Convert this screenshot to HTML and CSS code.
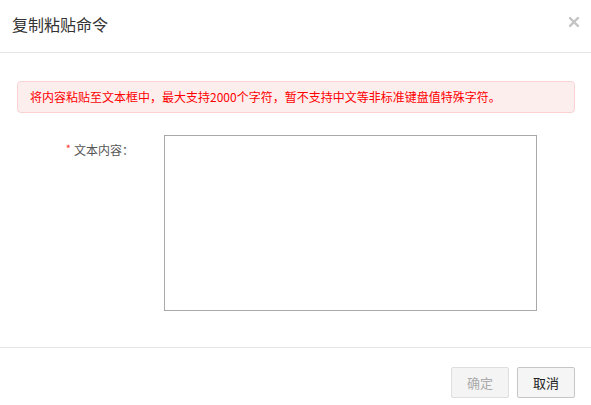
FILE: index.html
```html
<!DOCTYPE html>
<html lang="zh">
<head>
<meta charset="utf-8">
<title>复制粘贴命令</title>
<link rel="stylesheet" href="styles.css">
</head>
<body>
<div class="dialog">
  <div class="header">
    <div class="title">复制粘贴命令</div>
    <svg class="close" width="10" height="10" viewBox="0 0 10 10" aria-label="关闭">
      <path d="M1 1 L9 9 M9 1 L1 9" stroke="#c4c4c4" stroke-width="2.4" stroke-linecap="square"/>
    </svg>
  </div>
  <div class="content">
    <div class="alert">将内容粘贴至文本框中，最大支持2000个字符，暂不支持中文等非标准键盘值特殊字符。</div>
    <div class="form-row">
      <label class="label"><span class="req">*</span>文本内容：</label>
      <textarea class="input"></textarea>
    </div>
  </div>
  <div class="footer">
    <button class="btn btn-disabled" disabled>确定</button>
    <button class="btn btn-default">取消</button>
  </div>
</div>
</body>
</html>
```
FILE: styles.css
```css
html, body {
  margin: 0;
  padding: 0;
  background: #fff;
}
body {
  font-family: "Noto Sans CJK SC", "Liberation Sans", sans-serif;
  font-size: 12px;
  color: #333;
}
.dialog {
  width: 591px;
  height: 405px;
  display: flex;
  flex-direction: column;
}
.header {
  height: 52px;
  border-bottom: 1px solid #e5e5e5;
  display: flex;
  justify-content: space-between;
  align-items: flex-start;
  padding: 0 12px 0 12px;
}
.title {
  font-size: 16px;
  line-height: 22px;
  padding-top: 13px;
  color: #333;
}
.close {
  margin-top: 17px;
  display: block;
}
.content {
  padding: 28px 16px 36px 17px;
}
.alert {
  height: 30px;
  box-sizing: content-box;
  border: 1px solid #fad2d2;
  background: #fdeeee;
  border-radius: 4px;
  color: #f00;
  line-height: 30px;
  padding-left: 12px;
  font-size: 12px;
}
.form-row {
  display: flex;
  align-items: flex-start;
  margin-top: 22px;
}
.label {
  width: 117px;
  text-align: right;
  line-height: 20px;
  padding-top: 5px;
  color: #555;
  font-size: 12px;
}
.req {
  color: #f33;
  font-size: 11px;
  margin-right: 3px;
  position: relative;
  top: -2px;
}
.input {
  margin: 0 0 0 30px;
  width: 373px;
  height: 176px;
  box-sizing: border-box;
  border: 1px solid #a9a9a9;
  resize: none;
  padding: 4px;
  font-family: inherit;
  outline: none;
}
.footer {
  border-top: 1px solid #e5e5e5;
  display: flex;
  justify-content: flex-end;
  gap: 8px;
  padding: 19px 16px 0 0;
}
.btn {
  width: 58px;
  height: 31px;
  box-sizing: border-box;
  border-radius: 2px;
  font-family: inherit;
  font-size: 13px;
  padding: 0;
  cursor: pointer;
}
.btn-disabled {
  background: #f4f4f4;
  border: 1px solid #dedede;
  color: #ababab;
}
.btn-default {
  background: #f5f5f5;
  border: 1px solid #c6c6c6;
  color: #222;
}
```
